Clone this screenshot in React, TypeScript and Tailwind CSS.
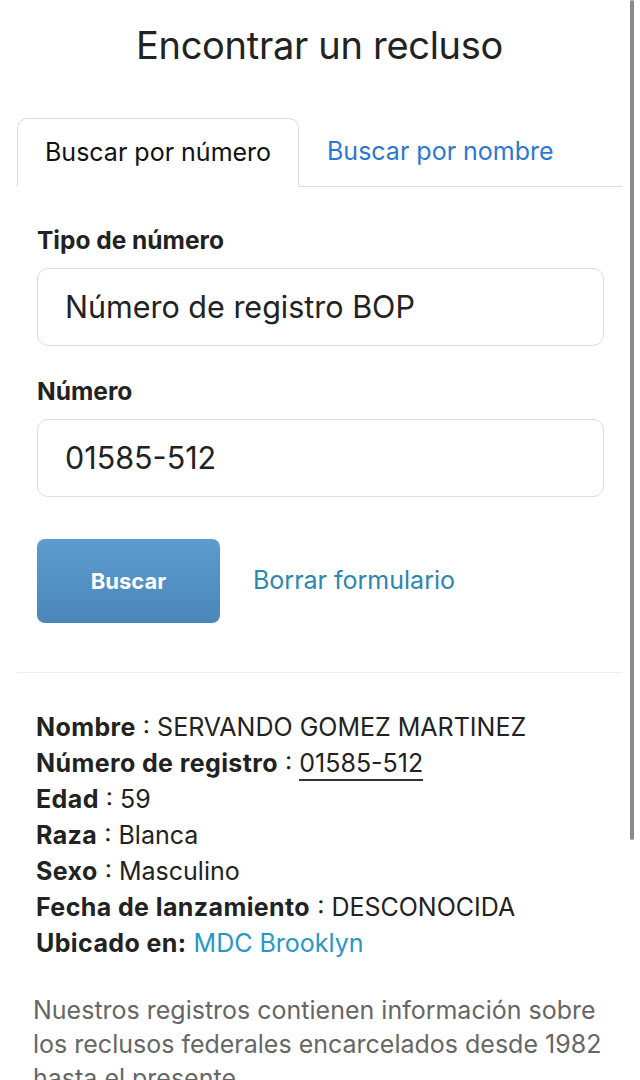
import React from "react";

const details: { label: string; value: string; kind?: "link" | "underline" }[] = [
  { label: "Nombre", value: "SERVANDO GOMEZ MARTINEZ" },
  { label: "Número de registro", value: "01585-512", kind: "underline" },
  { label: "Edad", value: "59" },
  { label: "Raza", value: "Blanca" },
  { label: "Sexo", value: "Masculino" },
  { label: "Fecha de lanzamiento", value: "DESCONOCIDA" },
];

export default function App() {
  return (
    <div className="relative h-[1080px] overflow-hidden bg-white font-['Inter',sans-serif] text-[#222]">
      <div className="px-[17px] pr-[18px]">
        <h1 className="pt-[22px] text-center text-[38px] leading-[46px] font-normal tracking-[-0.3px] text-[#222]">
          Encontrar un recluso
        </h1>

        <div className="mt-[50px] flex items-end border-b border-[#dedede]">
          <div className="-mb-px flex h-[69px] w-[282px] items-center rounded-t-[10px] border border-b-white border-[#dedede] bg-white pl-[27px] text-[25px] text-[#111]">
            Buscar por número
          </div>
          <div className="flex h-[68px] items-center pl-[28px] text-[25px] text-[#2b78d0]">
            Buscar por nombre
          </div>
        </div>

        <div className="px-[20px] pt-[38px]">
          <label className="block text-[24.5px] leading-[30px] font-bold text-[#222]">
            Tipo de número
          </label>
          <div className="mt-[13px] flex h-[78px] w-[567px] items-center rounded-[11px] border border-[#dcdcdc] pl-[27px] text-[30.5px] text-[#222]">
            Número de registro BOP
          </div>

          <label className="mt-[30px] block text-[24.5px] leading-[30px] font-bold text-[#222]">
            Número
          </label>
          <div className="mt-[13px] flex h-[78px] w-[567px] items-center rounded-[11px] border border-[#dcdcdc] pl-[27px] text-[30.5px] text-[#222]">
            01585-512
          </div>

          <div className="mt-[42px] flex items-center">
            <button className="h-[84px] w-[183px] rounded-[8px] bg-gradient-to-b from-[#5d9ccf] to-[#4a86ba] text-[22px] font-bold text-white">
              Buscar
            </button>
            <span className="ml-[33px] text-[25px] text-[#2a86b2]">Borrar formulario</span>
          </div>
        </div>

        <div className="mt-[49px] border-t border-[#efefef]" />

        <div className="px-[19px] pt-[36px] text-[25px] leading-[36px] text-[#222]">
          {details.map((d) => (
            <div key={d.label}>
              <span className="font-bold tracking-[0.4px]">{d.label}</span> :{" "}
              {d.kind === "underline" ? (
                <span className="border-b-2 border-[#333] pb-[1px]">{d.value}</span>
              ) : (
                d.value
              )}
            </div>
          ))}
          <div>
            <span className="font-bold tracking-[0.4px]">Ubicado en:</span>{" "}
            <span className="text-[#2896c9]">MDC Brooklyn</span>
          </div>

          <p className="-ml-[3px] mt-[32px] w-[580px] text-[25px] leading-[34px] text-[#666]">
            Nuestros registros contienen información sobre los reclusos federales encarcelados desde 1982
            hasta el presente
          </p>
        </div>
      </div>

      <div className="absolute top-0 right-[6px] h-[840px] w-[4px] rounded-full bg-[#8a8a8a]" />
    </div>
  );
}
